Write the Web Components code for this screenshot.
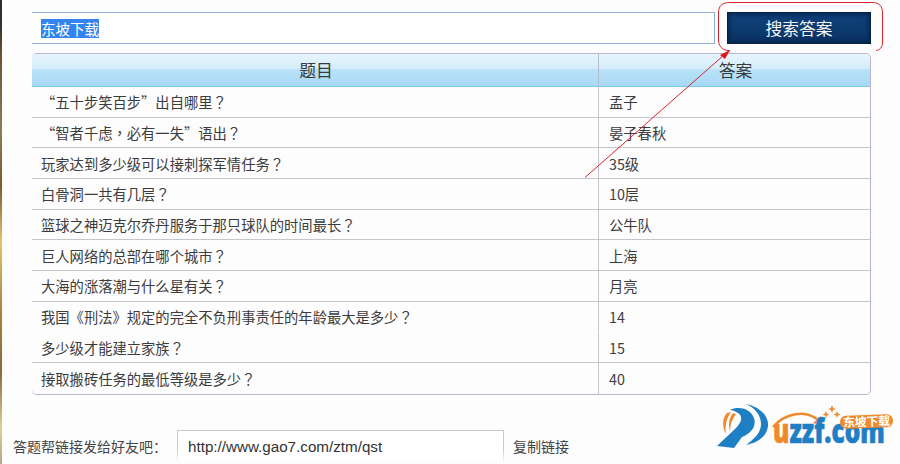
<!DOCTYPE html>
<html lang="zh">
<head>
<meta charset="utf-8">
<title>答题</title>
<style>
  html, body { margin: 0; padding: 0; background: #fefdfe; }
  body { font-family: "Noto Sans CJK SC", "Liberation Sans", sans-serif; color: #333; }
  /* 全角标点居中，和原图一致 */
  .p { font-family: "Noto Sans CJK TC", sans-serif; }
</style>
</head>
<body>

<template id="qa-page-tpl">
  <style>
    :host {
      display: block;
      position: relative;
      box-sizing: border-box;
      width: 900px;
      height: 464px;
      overflow: hidden;
      padding: 12px 0 0 32px;
      background: #fefdfe;
    }
    .edge {
      position: absolute;
      left: 0;
      top: 0;
      width: 2px;
      height: 464px;
      background: linear-gradient(#2d2a28 0, #3a3430 6%, #6d5334 12%, #8f7b57 28%, #7d5a30 40%, #e2c36a 52%, #a9803c 68%, #8a6a3a 80%, #e0cf90 92%, #b0a888 100%);
    }
  </style>
  <div class="edge"></div>
  <slot></slot>
</template>

<template id="search-bar-tpl">
  <style>
    :host {
      display: flex;
      width: 839px;
      height: 32px;
      gap: 12px;
      font-size: 14.5px;
    }
    .input {
      flex: 1;
      box-sizing: border-box;
      display: flex;
      align-items: center;
      padding-left: 9px;
      background: #fff;
      border: 1px solid #8fb1d8;
      border-left: 0;
    }
    .input span {
      background: #3284ee;
      color: #fff;
      line-height: 19px;
    }
    .btn {
      flex: 0 0 144px;
      display: flex;
      align-items: center;
      justify-content: center;
      color: #f4f4f4;
      font-size: 16.8px;
      background: linear-gradient(#0d3f78, #0d3c72 50%, #0a3060);
      box-shadow: inset 0 0 0 1px #062144, inset 0 0 5px 2px #06244c;
    }
  </style>
  <div class="input"><span><slot></slot></span></div>
  <div class="btn"><slot name="action"></slot></div>
</template>

<template id="qa-table-tpl">
  <style>
    :host {
      display: block;
      box-sizing: border-box;
      width: 839px;
      margin-top: 9px;
      border: 1px solid #b9b6d2;
      border-left: 0;
      border-radius: 5px;
      font-size: 14.3px;
    }
    .head {
      display: grid;
      grid-template-columns: 566px 1fr;
      height: 33px;
      box-sizing: border-box;
      border-bottom: 1px solid #7fcbe6;
      border-radius: 5px 5px 0 0;
      font-size: 16.8px;
      color: #3a3a3a;
      background: linear-gradient(#e7f5fc 0, #d4edf9 45%, #b9e2f7 50%, #a6d9f4 100%);
    }
    .head div {
      display: flex;
      align-items: center;
      justify-content: center;
      padding-left: 2px;
    }
    .head div + div { border-left: 1px solid #b3bcd0; }
  </style>
  <div class="head">
    <div>题目</div>
    <div>答案</div>
  </div>
  <slot></slot>
</template>

<template id="qa-row-tpl">
  <style>
    :host {
      display: grid;
      grid-template-columns: 566px 1fr;
      box-sizing: border-box;
      height: 30.7px;
      border-bottom: 1px solid #c6c5cb;
      color: #3c3c3c;
    }
    :host([plain]) { border-bottom-color: transparent; }
    :host(:last-child) { border-bottom: 0; }
    div {
      display: flex;
      align-items: center;
      padding-left: 9px;
      white-space: pre;
    }
    .a { border-left: 1px solid #c6c5cb; padding-left: 10px; }
  </style>
  <div><slot></slot></div>
  <div class="a"><slot name="answer"></slot></div>
</template>

<template id="share-bar-tpl">
  <style>
    :host {
      display: flex;
      align-items: flex-start;
      margin: 9px 0 0 -19px;
      width: 881px;
      font-size: 14px;
      color: #444;
    }
    .label { margin-top: 32px; width: 164px; white-space: nowrap; }
    .link {
      box-sizing: border-box;
      width: 327px;
      height: 31px;
      margin-top: 26px;
      padding: 7px 0 0 10px;
      background: #fff;
      border-style: solid;
      border-width: 1px 1px 0 1px;
      border-image: linear-gradient(#c9c9c9 60%, #fefdfe) 1;
      font: 15.2px "Liberation Sans", sans-serif;
      color: #333;
    }
    .copy { margin: 32px 0 0 9px; white-space: nowrap; }
    ::slotted(site-logo) { margin-left: auto; }
  </style>
  <div class="label"><slot name="label"></slot></div>
  <div class="link"><slot name="link"></slot></div>
  <div class="copy"><slot name="copy"></slot></div>
  <slot></slot>
</template>

<template id="site-logo-tpl">
  <style>
    :host { display: block; width: 178px; height: 54px; }
    svg { display: block; }
    text { font-family: "Open Sans", "Liberation Sans", sans-serif; font-weight: 800; }
    .cn { font-family: "Noto Sans CJK SC", sans-serif; font-weight: 700; }
  </style>
  <svg width="178" height="54" viewBox="0 0 178 54">
    <path fill="#1f7fc4" d="M30 0C44 3 53 12 52 22C51 32 42 39 30 41C38 35 45 29 45 20C45 11 39 4 30 0Z"/>
    <path fill="#1f7fc4" d="M14 6C22 2 34 4 38 14C41 23 34 30 26 33L18 44L1 42C7 36 14 30 20 24C26 18 27 12 22 9C19 7 16 6 14 6Z"/>
    <path fill="#ee8a2c" d="M11 9C6 14 6 23 10 30C9 22 10 15 15 8Z"/>
    <path fill="#ee8a2c" d="M17 9C13 14 12 21 14 27C14 21 16 15 20 10Z"/>
    <path fill="none" stroke="#ee8a2c" stroke-width="2.4" d="M57 23C68 10 90 4 103 17"/>
    <path fill="#ee8a2c" d="M107 22L97 19L105 12Z"/>
    <path fill="#ee8a2c" d="M116 1L117.2 4L120 5L117.2 6L116 9L114.8 6L112 5L114.8 4ZM110 7L111 9.5L113.5 10.5L111 11.5L110 14L109 11.5L106.500 10.5L109 9.5ZM121 7L122 9.500L124.500 10.500L122 11.500L121 14L120 11.500L117.500 10.500L120 9.500Z"/>
    <g transform="translate(57 39) scale(1 1.35)">
      <text x="0" y="0" font-size="24.500" stroke-width="0.5" fill="#1f7fc4" stroke="#1f7fc4"><tspan fill="#ee8a2c" stroke="#ee8a2c">u</tspan>zzf.com</text>
    </g>
    <g transform="rotate(-2 150 17)">
      <rect x="124" y="11" width="53" height="13" rx="6" fill="#ee8a2c"/>
      <text class="cn" x="127" y="22" font-size="12" fill="#fff" textLength="47">东坡下载</text>
    </g>
  </svg>
</template>

<template id="red-callout-tpl">
  <style>
    :host { position: absolute; left: 0; top: 0; width: 900px; height: 464px; pointer-events: none; }
    svg { display: block; }
  </style>
  <svg width="900" height="464" viewBox="0 0 900 464">
    <path fill="none" stroke="#d9262c" stroke-width="1" d="M728 50.500H730M876 50.500C880 50 882.500 47 882.500 43V13C882.500 6 879 2.500 872 2.500H730C722 2.500 718.500 6 718.500 13V40C718.500 46 722 50 728 50.500"/>
    <path fill="none" stroke="#d9262c" stroke-width="1" d="M585 177.500L724 55"/>
    <path fill="#e0141c" d="M730 50L720 55L725 59Z"/>
  </svg>
</template>

<qa-page>
  <search-bar>东坡下载<span slot="action">搜索答案</span></search-bar>
  <qa-table>
    <qa-row>“五十步笑百步”出自哪里<span class="p">？</span><span slot="answer">孟子</span></qa-row>
    <qa-row>“智者千虑<span class="p">，</span>必有一失”语出<span class="p">？</span><span slot="answer">晏子春秋</span></qa-row>
    <qa-row>玩家达到多少级可以接刺探军情任务<span class="p">？</span><span slot="answer">35级</span></qa-row>
    <qa-row>白骨洞一共有几层<span class="p">？</span><span slot="answer">10层</span></qa-row>
    <qa-row>篮球之神迈克尔乔丹服务于那只球队的时间最长<span class="p">？</span><span slot="answer">公牛队</span></qa-row>
    <qa-row>巨人网络的总部在哪个城市<span class="p">？</span><span slot="answer">上海</span></qa-row>
    <qa-row>大海的涨落潮与什么星有关<span class="p">？</span><span slot="answer">月亮</span></qa-row>
    <qa-row plain>我国《刑法》规定的完全不负刑事责任的年龄最大是多少<span class="p">？</span><span slot="answer">14</span></qa-row>
    <qa-row>多少级才能建立家族<span class="p">？</span><span slot="answer">15</span></qa-row>
    <qa-row>接取搬砖任务的最低等级是多少<span class="p">？</span><span slot="answer">40</span></qa-row>
  </qa-table>
  <share-bar>
    <span slot="label">答题帮链接发给好友吧<span class="p">：</span></span>
    <span slot="link">http://www.gao7.com/ztm/qst</span>
    <span slot="copy">复制链接</span>
    <site-logo></site-logo>
  </share-bar>
  <red-callout></red-callout>
</qa-page>

<script>
  // 每个组件都从同名模板克隆影子节点
  const names = ['qa-page', 'search-bar', 'qa-table', 'qa-row', 'share-bar', 'site-logo', 'red-callout']

  names.forEach(name => {
    customElements.define(name, class extends HTMLElement {
      constructor() {
        super()
        const content = document.getElementById(name + '-tpl').content
        this.attachShadow({ mode: 'open' }).appendChild(content.cloneNode(true))
      }
    })
  })
</script>
</body>
</html>
